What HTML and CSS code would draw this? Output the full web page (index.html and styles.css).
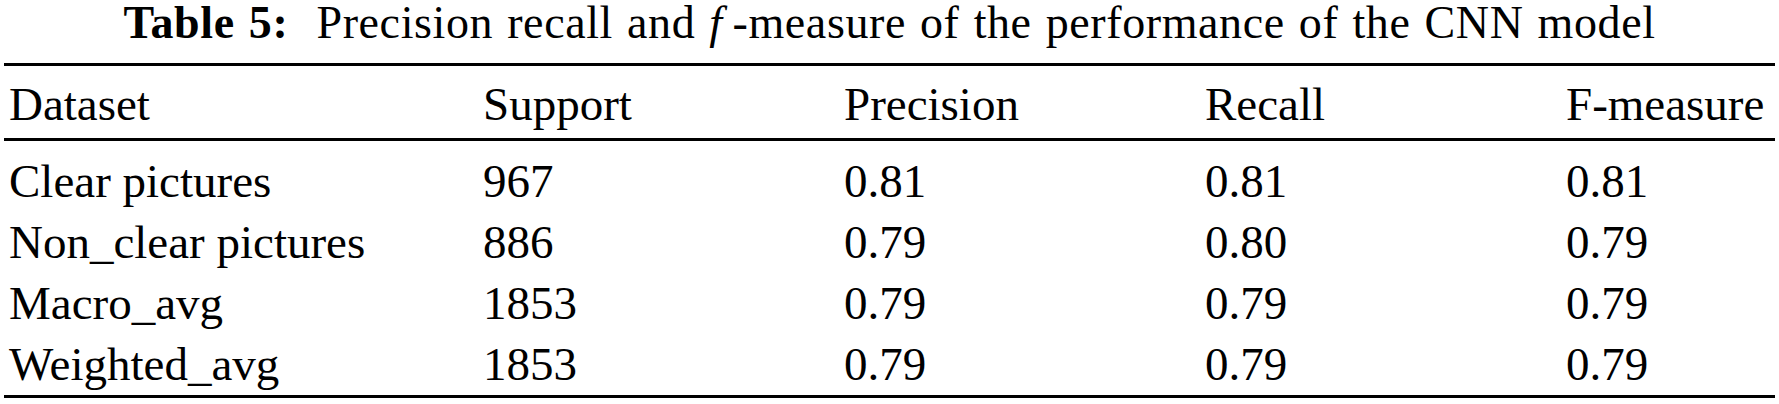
FILE: index.html
```html
<!DOCTYPE html>
<html lang="en">
<head>
    <meta charset="UTF-8">
    <title>Table 5</title>

    <link rel="stylesheet" href="styles.css">
</head>
<body>
<div class="tableWrap">
    <p class="caption"><b>Table 5:</b>&nbsp; Precision recall and <i>f</i>&#8201;-measure of the performance of the CNN model</p>
    <div class="results" role="table">
        <div class="row headRow" role="row">
            <div class="cell" role="columnheader">Dataset</div>
            <div class="cell" role="columnheader">Support</div>
            <div class="cell" role="columnheader">Precision</div>
            <div class="cell" role="columnheader">Recall</div>
            <div class="cell" role="columnheader">F-measure</div>
        </div>
        <div class="bodyRows">
            <div class="row" role="row">
                <div class="cell">Clear pictures</div>
                <div class="cell">967</div>
                <div class="cell">0.81</div>
                <div class="cell">0.81</div>
                <div class="cell">0.81</div>
            </div>
            <div class="row" role="row">
                <div class="cell">Non_clear pictures</div>
                <div class="cell">886</div>
                <div class="cell">0.79</div>
                <div class="cell">0.80</div>
                <div class="cell">0.79</div>
            </div>
            <div class="row" role="row">
                <div class="cell">Macro_avg</div>
                <div class="cell">1853</div>
                <div class="cell">0.79</div>
                <div class="cell">0.79</div>
                <div class="cell">0.79</div>
            </div>
            <div class="row" role="row">
                <div class="cell">Weighted_avg</div>
                <div class="cell">1853</div>
                <div class="cell">0.79</div>
                <div class="cell">0.79</div>
                <div class="cell">0.79</div>
            </div>
        </div>
    </div>
</div>
</body>
</html>
```

FILE: styles.css
```css
body {
    margin: 0;
    background-color: white;
    color: black;
    font-family: "Liberation Serif", "Times New Roman", serif;
    font-size: 46px;
}

.tableWrap {
    padding: 0 4px;
}

.caption {
    margin: 0 0 17px;
    line-height: 46px;
    letter-spacing: 0.6px;
    word-spacing: 2px;
    text-align: center;
}

.caption b {
    font-weight: bold;
}

.results {
    border-top: 3px solid black;
    border-bottom: 3px solid black;
    font-size: 47px;
}

.row {
    display: grid;
    grid-template-columns: 474px 361px 361px 361px 1fr;
    line-height: 61px;
}

.headRow {
    padding: 8px 0 3px;
    border-bottom: 3px solid black;
}

.bodyRows {
    padding-top: 10px;
}

.cell {
    padding-left: 5px;
    white-space: nowrap;
}
```
